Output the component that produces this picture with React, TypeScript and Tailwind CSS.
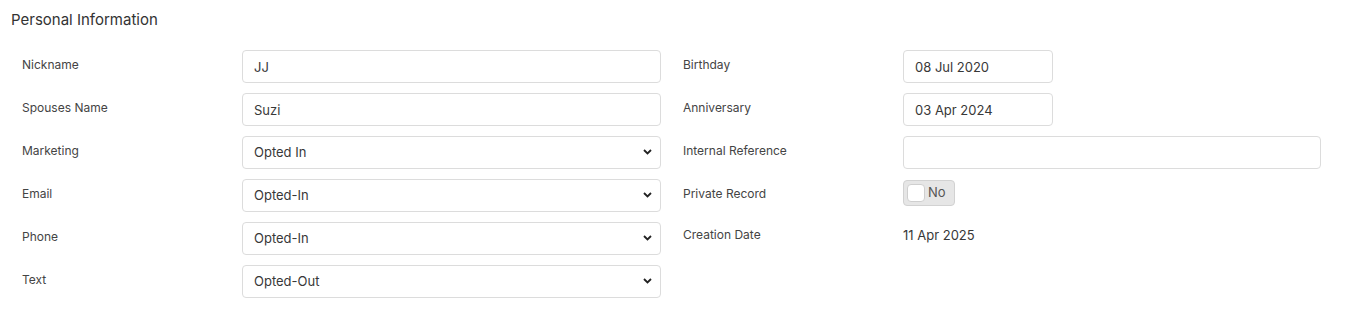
const font = { fontFamily: "Inter, 'Noto Sans', sans-serif" };

function Label({ children }: { children: React.ReactNode }) {
  return <div className="w-[220px] shrink-0 pb-[3px] text-[12px] text-[#444]">{children}</div>;
}

function TextInput({ value, width = "w-[419px]" }: { value: string; width?: string }) {
  return (
    <input
      readOnly
      value={value}
      className={`h-[33px] ${width} rounded-[4px] border border-[#dcdcdc] bg-white px-[11px] text-[13px] text-[#383838] outline-none`}
    />
  );
}

function SelectBox({ value }: { value: string }) {
  return (
    <div className="relative h-[33px] w-[419px]">
      <select
        defaultValue={value}
        className="h-full w-full appearance-none rounded-[4px] border border-[#dcdcdc] bg-white px-[11px] text-[13px] text-[#383838] outline-none"
      >
        <option>{value}</option>
      </select>
      <svg
        className="pointer-events-none absolute right-[9px] top-[13px]"
        width="9"
        height="6"
        viewBox="0 0 9 6"
      >
        <path d="M1 1l3.5 3.5L8 1" fill="none" stroke="#222" strokeWidth="1.8" />
      </svg>
    </div>
  );
}

function Row({ label, children }: { label: string; children: React.ReactNode }) {
  return (
    <div className="flex h-[33px] items-center">
      <Label>{label}</Label>
      {children}
    </div>
  );
}

export default function App() {
  return (
    <div className="h-[309px] w-full bg-white" style={font}>
      <h2 className="pl-[11px] pt-[11px] text-[15px] leading-[18px] text-[#333]">
        Personal Information
      </h2>
      <div className="mt-[21px] flex gap-[22px] pl-[22px]">
        <div className="flex w-[639px] flex-col gap-[10px]">
          <Row label="Nickname">
            <TextInput value="JJ" />
          </Row>
          <Row label="Spouses Name">
            <TextInput value="Suzi" />
          </Row>
          <Row label="Marketing">
            <SelectBox value="Opted In" />
          </Row>
          <Row label="Email">
            <SelectBox value="Opted-In" />
          </Row>
          <Row label="Phone">
            <SelectBox value="Opted-In" />
          </Row>
          <Row label="Text">
            <SelectBox value="Opted-Out" />
          </Row>
        </div>
        <div className="flex w-[639px] flex-col gap-[10px]">
          <Row label="Birthday">
            <TextInput value="08 Jul 2020" width="w-[150px]" />
          </Row>
          <Row label="Anniversary">
            <TextInput value="03 Apr 2024" width="w-[150px]" />
          </Row>
          <Row label="Internal Reference">
            <TextInput value="" width="w-[418px]" />
          </Row>
          <Row label="Private Record">
            <div className="mt-[1px] flex h-[26px] w-[52px] items-center gap-[3px] self-start rounded-[4px] border border-[#d2d2d2] bg-[#e6e6e6] pl-[3px]">
              <span className="h-[18px] w-[18px] rounded-[4px] border border-[#cfcfcf] bg-white" />
              <span className="text-[13px] text-[#555]">No</span>
            </div>
          </Row>
          <div className="flex h-[33px] items-start pt-[4px]">
            <Label>Creation Date</Label>
            <span className="text-[13px] text-[#383838]">11 Apr 2025</span>
          </div>
        </div>
      </div>
    </div>
  );
}
